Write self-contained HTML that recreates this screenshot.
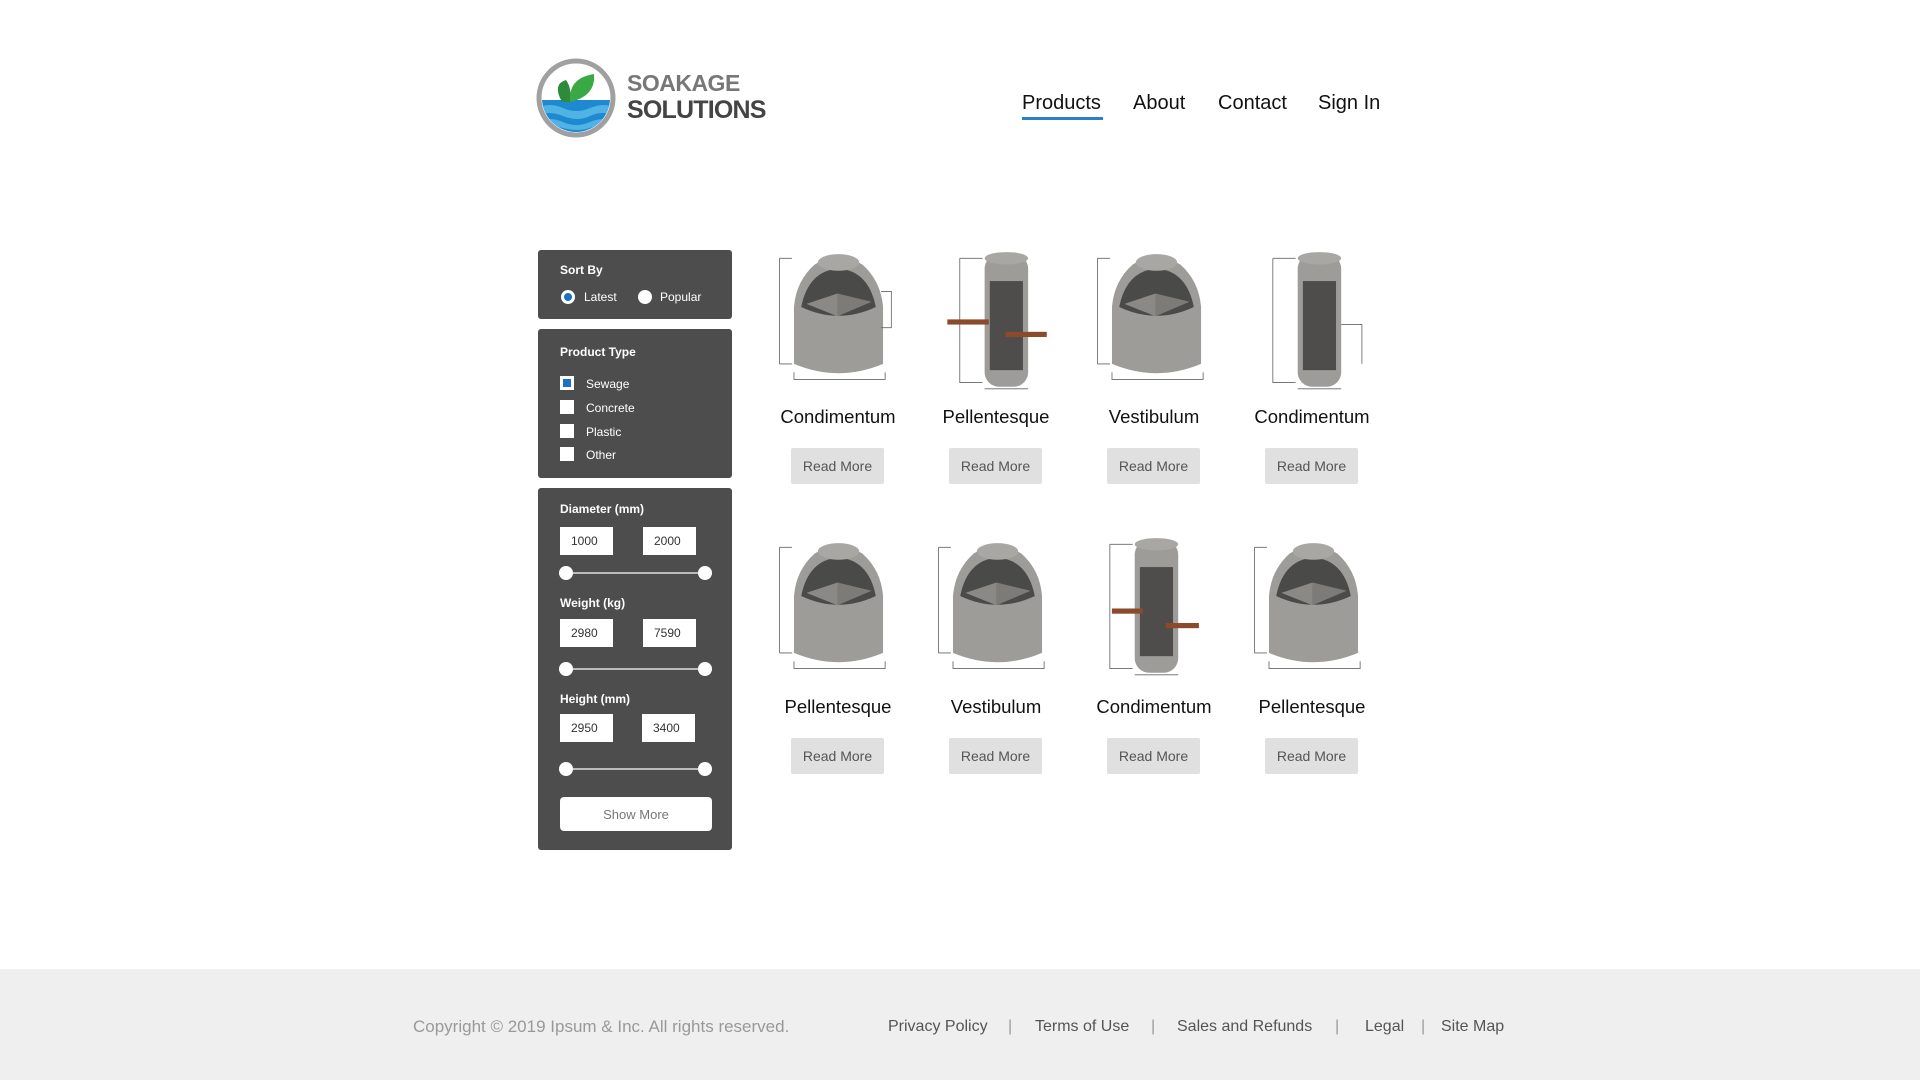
<!DOCTYPE html>
<html><head><meta charset="utf-8"><style>
*{margin:0;padding:0;box-sizing:border-box}
body{width:1920px;height:1080px;background:#fff;font-family:"Liberation Sans",sans-serif;position:relative;overflow:hidden}
.a{position:absolute}
.nav{font-size:20px;color:#111;top:92px}
.box{position:absolute;left:538px;width:194px;background:#4d4d4d;border-radius:3px}
.lbl{position:absolute;left:22px;color:#fff;font-weight:bold;font-size:12px}
.t{position:absolute;color:#fff;font-size:12px}
.cb{position:absolute;left:22px;width:14px;height:14px;background:#fff}
.inp{position:absolute;width:53px;height:28px;background:#fff;font-size:12px;color:#333;line-height:28px;padding-left:11px}
.sl{position:absolute;left:28px;width:139px;height:2px;background:#bbb}
.sl:before,.sl:after{content:"";position:absolute;top:-6px;width:14px;height:14px;border-radius:50%;background:#fff}
.sl:before{left:-7px}.sl:after{right:-7px}
.title{position:absolute;width:158px;text-align:center;font-size:18.5px;color:#111}
.btn{position:absolute;width:93px;height:36px;background:#e0e0e0;border-radius:2px;text-align:center;line-height:37px;font-size:14px;color:#555}
.img{position:absolute;width:130px;height:145px}
.f{position:absolute;top:1018px;font-size:16px;color:#555}
</style></head><body>
<svg class="a" style="left:536px;top:58px" width="80" height="80" viewBox="0 0 80 80">
<defs><clipPath id="c"><circle cx="40" cy="40" r="34"/></clipPath></defs>
<circle cx="40" cy="40" r="37" fill="#fff" stroke="#a0a0a0" stroke-width="5"/>
<g clip-path="url(#c)"><rect x="0" y="42" width="80" height="40" fill="#1e88d0"/>
<path d="M0 50 Q14 44 27 50 T54 50 T80 50 V58 Q66 52 54 58 T27 58 T0 58Z" fill="#4fb3e6"/>
<path d="M0 64 Q14 58 27 64 T54 64 T80 64 V70 Q66 66 54 70 T27 70 T0 70Z" fill="#4fb3e6"/></g>
<path d="M26 44 Q16 26 30 22 Q36 30 34 44Z" fill="#2e8b3a"/>
<path d="M34 44 Q32 20 58 16 Q60 38 34 44Z" fill="#3aa845"/>
</svg>
<div class="a" style="left:627px;top:70px;font-weight:bold;font-size:23px;color:#777;letter-spacing:-0.5px">SOAKAGE</div>
<div class="a" style="left:627px;top:96px;font-weight:bold;font-size:25px;color:#444;letter-spacing:-0.8px">SOLUTIONS</div>
<div class="a nav" style="left:1022px">Products</div>
<div class="a" style="left:1022px;top:117px;width:81px;height:3px;background:#2a7fc6"></div>
<div class="a nav" style="left:1133px">About</div>
<div class="a nav" style="left:1218px">Contact</div>
<div class="a nav" style="left:1318px">Sign In</div>

<div class="box" style="top:250px;height:69px">
<div class="lbl" style="top:13px">Sort By</div>
<div class="a" style="left:23px;top:40px;width:14px;height:14px;border-radius:50%;background:#fff"><div class="a" style="left:3px;top:3px;width:8px;height:8px;border-radius:50%;background:#1a72c0"></div></div>
<div class="t" style="left:46px;top:40px">Latest</div>
<div class="a" style="left:100px;top:40px;width:14px;height:14px;border-radius:50%;background:#fff"></div>
<div class="t" style="left:122px;top:40px">Popular</div>
</div>
<div class="box" style="top:329px;height:149px">
<div class="lbl" style="top:16px">Product Type</div>
<div class="cb" style="top:47px"><div class="a" style="left:3px;top:3px;width:8px;height:8px;background:#1a72c0"></div></div>
<div class="t" style="left:48px;top:48px">Sewage</div>
<div class="cb" style="top:71px"></div><div class="t" style="left:48px;top:72px">Concrete</div>
<div class="cb" style="top:95px"></div><div class="t" style="left:48px;top:96px">Plastic</div>
<div class="cb" style="top:118px"></div><div class="t" style="left:48px;top:119px">Other</div>
</div>
<div class="box" style="top:488px;height:362px">
<div class="lbl" style="top:14px">Diameter (mm)</div>
<div class="inp" style="left:22px;top:39px">1000</div><div class="inp" style="left:105px;top:39px">2000</div>
<div class="sl" style="top:84px"></div>
<div class="lbl" style="top:108px">Weight (kg)</div>
<div class="inp" style="left:22px;top:131px">2980</div><div class="inp" style="left:105px;top:131px">7590</div>
<div class="sl" style="top:180px"></div>
<div class="lbl" style="top:204px">Height (mm)</div>
<div class="inp" style="left:22px;top:226px">2950</div><div class="inp" style="left:104px;top:226px">3400</div>
<div class="sl" style="top:280px"></div>
<div class="a" style="left:22px;top:309px;width:152px;height:34px;background:#fff;border-radius:4px;text-align:center;line-height:36px;font-size:13px;color:#777">Show More</div>
</div>

<svg width="0" height="0" style="position:absolute"><defs>
<g id="w"><g stroke="#666" stroke-width="0.8" fill="none"><path d="M6 8H18M6 8V110M6 110H18M20 118V125H108V118"/></g>
<path d="M20 55 Q22 30 40 14 Q62 0 86 14 Q104 30 106 55 V110 Q63 128 20 110Z" fill="#9d9c99"/>
<path d="M27 55 Q34 20 63 18 Q92 20 99 55 Q63 72 27 55Z" fill="#4a4a48"/>
<path d="M32 52 L62 42 L62 64Z" fill="#8a8985"/>
<path d="M62 42 L95 50 L62 64Z" fill="#7c7b77"/>
<ellipse cx="63" cy="12" rx="20" ry="8" fill="#a8a7a3"/></g>
<g id="tl"><g stroke="#666" stroke-width="0.8" fill="none"><path d="M4 8H26M4 8V128H26M28 134H70"/></g>
<rect x="28" y="4" width="42" height="128" rx="14" fill="#9d9c99"/>
<ellipse cx="49" cy="8" rx="21" ry="6" fill="#a8a7a3"/>
<rect x="33" y="30" width="32" height="86" fill="#4e4d4b"/></g>
</defs></svg>

<svg class="img" style="left:773px;top:250px" viewBox="0 0 125 140"><use href="#w"/><path d="M104 40H114V75H104" stroke="#666" stroke-width=".8" fill="none"/></svg>
<svg class="img" style="left:945px;top:250px" viewBox="0 0 125 140"><use href="#tl" transform="translate(10,0)"/><rect x="2" y="67" width="40" height="5" fill="#8b4a2c"/><rect x="58" y="79" width="40" height="5" fill="#8b4a2c"/></svg>
<svg class="img" style="left:1091px;top:250px" viewBox="0 0 125 140"><use href="#w"/></svg>
<svg class="img" style="left:1256px;top:250px" viewBox="0 0 125 140"><use href="#tl" transform="translate(12,0)"/><path d="M82 72H102V110" stroke="#666" stroke-width=".8" fill="none"/></svg>

<svg class="img" style="left:773px;top:539px" viewBox="0 0 125 140"><use href="#w"/></svg>
<svg class="img" style="left:932px;top:539px" viewBox="0 0 125 140"><use href="#w"/></svg>
<svg class="img" style="left:1093px;top:536px" viewBox="0 0 125 140"><use href="#tl" transform="translate(12,0)"/><rect x="18" y="70" width="30" height="5" fill="#8b4a2c"/><rect x="70" y="84" width="32" height="5" fill="#8b4a2c"/></svg>
<svg class="img" style="left:1248px;top:539px" viewBox="0 0 125 140"><use href="#w"/></svg>

<div class="title" style="left:759px;top:406px">Condimentum</div>
<div class="title" style="left:917px;top:406px">Pellentesque</div>
<div class="title" style="left:1075px;top:406px">Vestibulum</div>
<div class="title" style="left:1233px;top:406px">Condimentum</div>
<div class="btn" style="left:791px;top:448px">Read More</div>
<div class="btn" style="left:949px;top:448px">Read More</div>
<div class="btn" style="left:1107px;top:448px">Read More</div>
<div class="btn" style="left:1265px;top:448px">Read More</div>

<div class="title" style="left:759px;top:696px">Pellentesque</div>
<div class="title" style="left:917px;top:696px">Vestibulum</div>
<div class="title" style="left:1075px;top:696px">Condimentum</div>
<div class="title" style="left:1233px;top:696px">Pellentesque</div>
<div class="btn" style="left:791px;top:738px">Read More</div>
<div class="btn" style="left:949px;top:738px">Read More</div>
<div class="btn" style="left:1107px;top:738px">Read More</div>
<div class="btn" style="left:1265px;top:738px">Read More</div>

<div class="a" style="left:0;top:969px;width:1920px;height:111px;background:#efefef"></div>
<div class="f" style="left:413px;color:#999;font-size:17px;top:1017px">Copyright © 2019 Ipsum &amp; Inc. All rights reserved.</div>
<div class="f" style="left:888px">Privacy Policy</div>
<div class="f" style="left:1008px;color:#999">|</div>
<div class="f" style="left:1035px">Terms of Use</div>
<div class="f" style="left:1151px;color:#999">|</div>
<div class="f" style="left:1177px">Sales and Refunds</div>
<div class="f" style="left:1335px;color:#999">|</div>
<div class="f" style="left:1365px">Legal</div>
<div class="f" style="left:1421px;color:#999">|</div>
<div class="f" style="left:1441px">Site Map</div>
</body></html>
